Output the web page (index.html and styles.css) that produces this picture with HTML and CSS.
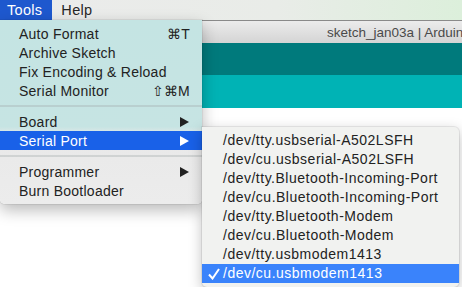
FILE: index.html
```html
<!DOCTYPE html>
<html lang="en">
	<head>
		<meta charset="UTF-8">
		<meta name="viewport" content="width=device-width, initial-scale=1.0">
		<title>Tools menu</title>
		<link rel="stylesheet" href="styles.css">
	</head>
    <body>
        <div class="menubar">
            <span class="mb_item on">Tools</span>
            <span class="mb_item">Help</span>
        </div>
        <div class="window">
            <div class="titlebar"><span class="title">sketch_jan03a | Arduino 1.6.7</span></div>
            <div class="toolbar"></div>
            <div class="tabbar"></div>
            <div class="editor"></div>
        </div>

        <ul class="menu">
            <li><span>Auto Format</span><span class="key">&#8984;T</span></li>
            <li><span>Archive Sketch</span></li>
            <li><span>Fix Encoding &amp; Reload</span></li>
            <li><span>Serial Monitor</span><span class="key">&#8679;&#8984;M</span></li>
            <li class="sep"></li>
            <li><span>Board</span><svg class="arrow" width="9" height="10" viewBox="0 0 9 10"><polygon points="0,0 9,5 0,10"/></svg></li>
            <li class="on"><span>Serial Port</span><svg class="arrow" width="9" height="10" viewBox="0 0 9 10"><polygon points="0,0 9,5 0,10"/></svg></li>
            <li class="sep"></li>
            <li><span>Programmer</span><svg class="arrow" width="9" height="10" viewBox="0 0 9 10"><polygon points="0,0 9,5 0,10"/></svg></li>
            <li><span>Burn Bootloader</span></li>
        </ul>

        <ul class="submenu">
            <li>/dev/tty.usbserial-A502LSFH</li>
            <li>/dev/cu.usbserial-A502LSFH</li>
            <li>/dev/tty.Bluetooth-Incoming-Port</li>
            <li>/dev/cu.Bluetooth-Incoming-Port</li>
            <li>/dev/tty.Bluetooth-Modem</li>
            <li>/dev/cu.Bluetooth-Modem</li>
            <li>/dev/tty.usbmodem1413</li>
            <li class="on"><svg class="check" width="12" height="12" viewBox="0 0 12 12"><polyline points="1,6.5 4.5,10.5 11,1"/></svg>/dev/cu.usbmodem1413</li>
        </ul>
    </body>
</html>
```

FILE: styles.css
```css
body{padding:0; margin:0; width:462px; height:287px; overflow:hidden; position:relative; background:#fff;
    font-family:"Liberation Sans", Arial, sans-serif; font-size:14px; color:#222;}
ul{list-style:none; margin:0; padding:0;}

.menubar{display:flex; height:20px; line-height:20px; font-size:14.5px; letter-spacing:.3px;
    background:linear-gradient(90deg, #ebebeb 0%, #e9ece8 60%, #dcefdb 100%);}
.mb_item{padding:0 9px 0 9px; color:#262626;}
.mb_item.on{background:#1e58ce; color:#fff; padding:0 10px 0 7px;}

.window{display:flex; flex-direction:column; height:267px;}
.titlebar{height:23px; line-height:23px; background:linear-gradient(#ececec, #d4d4d4); border-top:1px solid #8a8a8a;
    box-sizing:border-box; white-space:nowrap; overflow:hidden; font-size:13.5px; color:#4a4a4a; padding-left:327px;}
.toolbar{height:32px; background:#007a7c;}
.tabbar{height:33px; background:#00b3b5;}
.editor{flex:1; background:#fff;}

.menu{position:absolute; left:0; top:20px; width:202px; padding:4px 0; box-sizing:border-box; letter-spacing:.25px;
    background:linear-gradient(#c4e4e3 0%, #c6e4e3 58%, #e9e9e9 63%, #ececec 100%);
    border-radius:0 0 5px 5px; box-shadow:0 6px 16px rgba(0,0,0,.28), 0 0 0 1px rgba(0,0,0,.06);}
.menu li{display:flex; align-items:center; height:19px; padding:0 12px 0 19px;}
.menu li .key{margin-left:auto; color:#222;}
.menu li .arrow{margin-left:auto; fill:#222; margin-right:1px;}
.menu li.on{background:#1961e8; color:#fff;}
.menu li.on .arrow{fill:#fff;}
.menu li.sep{height:12px; padding:0;}
.menu li.sep::after{content:""; display:block; width:100%; height:2px; background:rgba(160,170,170,.35);}

.submenu{position:absolute; left:202px; top:127px; width:257px; padding:4px 0; box-sizing:border-box; letter-spacing:.5px;
    background:#f1f2f0; border-radius:0 5px 5px 5px; box-shadow:0 4px 14px rgba(0,0,0,.25), 0 0 0 1px rgba(0,0,0,.07);}
.submenu li{height:19px; line-height:19px; padding-left:21px; position:relative; color:#222;}
.submenu li.on{background:#3a83fb; color:#fff;}
.submenu .check{position:absolute; left:6px; top:4px; fill:none; stroke:#fff; stroke-width:2;}
```
